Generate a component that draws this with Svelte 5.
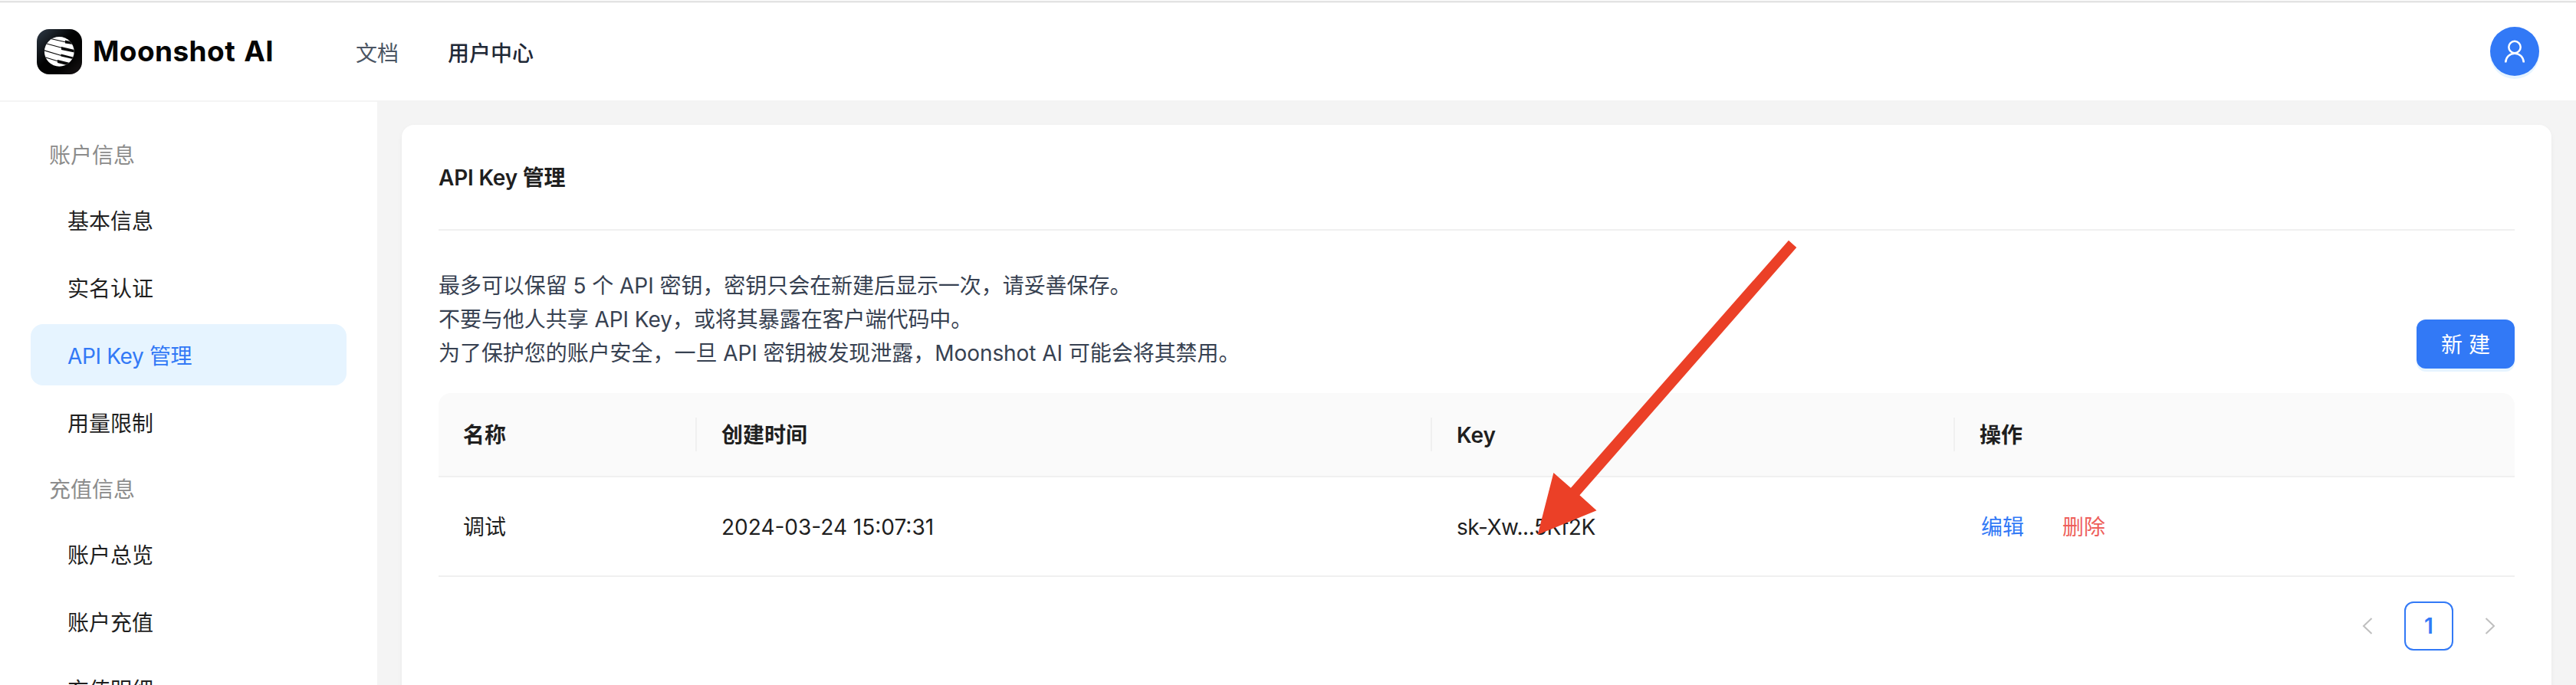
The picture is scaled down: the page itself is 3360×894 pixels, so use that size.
<script>
  const groups = [
    { title: '账户信息', items: ['基本信息', '实名认证', 'API Key 管理', '用量限制'] },
    { title: '充值信息', items: ['账户总览', '账户充值', '充值明细'] }
  ];
  const active = 'API Key 管理';
  const rows = [{ name: '调试', created: '2024-03-24 15:07:31', key: 'sk-Xw...5Kf2K' }];
</script>

<div class="page">
  <header>
    <div class="brand">
      <svg class="mark" width="59" height="59" viewBox="0 0 59 59">
        <defs>
          <linearGradient id="tile" x1="0" y1="0" x2="1" y2="1">
            <stop offset="0" stop-color="#2f3b48" />
            <stop offset="0.45" stop-color="#020202" />
            <stop offset="0.7" stop-color="#020202" />
            <stop offset="1" stop-color="#1a1617" />
          </linearGradient>
          <clipPath id="disc"><circle cx="29.3" cy="29.4" r="19.4" /></clipPath>
        </defs>
        <rect width="59" height="59" rx="16" fill="url(#tile)" />
        <g clip-path="url(#disc)">
          <rect x="9" y="9" width="41" height="41" fill="#fff" />
          <path d="M16 12l22 5M11 18.500l22 6M9 27.500l23 7M10 36.500l18 5.500" stroke="#080808" stroke-width="1.2" fill="none" />
          <path d="M37 14.500l13 3v3l-13-2zM32 23l19 4.500v3.500l-19-4zM31.500 32.500l19.500 5v2.500l-19.500-4.500zM27 40l20 5v4l-20-5z" fill="#080808" />
        </g>
      </svg>
      <span class="wordmark">Moonshot AI</span>
    </div>
    <nav>
      <a class="link">文档</a>
      <a class="link current">用户中心</a>
    </nav>
    <button class="avatar" aria-label="user">
      <svg width="28" height="30" viewBox="0 0 28 30" fill="none" stroke="#fff" stroke-width="2.500">
        <circle cx="14" cy="9.500" r="7.700" />
        <path d="M2.200 29.500a11.800 11.800 0 0 1 23.600 0" />
      </svg>
    </button>
  </header>

  <div class="body">
    <aside>
      {#each groups as group}
        <div class="group">{group.title}</div>
        {#each group.items as item}
          <div class="item" class:active={item === active}>{item}</div>
        {/each}
      {/each}
    </aside>

    <main>
      <section class="card">
        <h1>API Key 管理</h1>
        <div class="intro">
          <div class="notes">
            <p>最多可以保留 5 个 API 密钥，密钥只会在新建后显示一次，请妥善保存。</p>
            <p>不要与他人共享 API Key，或将其暴露在客户端代码中。</p>
            <p>为了保护您的账户安全，一旦 API 密钥被发现泄露，Moonshot AI 可能会将其禁用。</p>
          </div>
          <button class="create">新 建</button>
        </div>

        <div class="table">
          <div class="tr head">
            <div class="th">名称</div>
            <div class="th">创建时间</div>
            <div class="th">Key</div>
            <div class="th">操作</div>
          </div>
          {#each rows as row}
            <div class="tr">
              <div class="td">{row.name}</div>
              <div class="td date">{row.created}</div>
              <div class="td key">{row.key}</div>
              <div class="td actions">
                <a class="edit">编辑</a>
                <a class="remove">删除</a>
              </div>
            </div>
          {/each}
        </div>

        <div class="pager">
          <span class="cell"><svg width="14" height="22" viewBox="0 0 14 22"><path d="M12.500 1L2 11l10.500 10" /></svg></span>
          <span class="cell page-no">1</span>
          <span class="cell"><svg width="14" height="22" viewBox="0 0 14 22"><path d="M1.500 1L12 11 1.500 21" /></svg></span>
        </div>
      </section>
    </main>
  </div>

  <svg class="pointer" width="340" height="386" viewBox="2005 313 340 386">
    <path fill="#eb4027" d="M2333 313.700L2343.300 323L2060.400 646.300L2082.500 666.300L2005.700 697.700L2026.400 617L2048.900 636.700Z" />
  </svg>
</div>

<style>
  :global(body) {
    margin: 0;
    overflow: hidden;
  }
  .page {
    position: relative;
    width: 3360px;
    height: 894px;
    overflow: hidden;
    display: flex;
    flex-direction: column;
    box-sizing: border-box;
    background: #f4f4f4;
    font-family: Inter, 'Noto Sans CJK SC', sans-serif;
    font-size: 28px;
    line-height: 44px;
    color: #1f1f1f;
  }
  .page * {
    box-sizing: border-box;
  }
  header {
    flex: none;
    height: 133px;
    border-top: 3px solid #d0d0d0;
    border-image: linear-gradient(#f6f6f6 0 2px, #cdcdcd 2px 3px) 3 0 0 0;
    box-shadow: inset 0 -2px #f4f4f4;
    background: #fff;
    padding: 0 48px 2px;
    display: flex;
    align-items: center;
  }
  .brand {
    display: flex;
    align-items: center;
    width: 416px;
    gap: 14px;
  }
  .mark {
    display: block;
  }
  .wordmark {
    font-size: 37px;
    font-weight: 700;
    letter-spacing: 0.4px;
    word-spacing: 2px;
    color: #050505;
    white-space: nowrap;
  }
  nav {
    display: flex;
    gap: 64px;
    flex: 1;
    padding-top: 5px;
  }
  .link {
    color: #4b5563;
  }
  .link.current {
    color: #1f2937;
    font-weight: 500;
  }
  button {
    border: 0;
    padding: 0;
    background: #3279f6;
    color: #fff;
    font: inherit;
    box-shadow: 0 4px 0 #e6f4ff;
  }
  .avatar {
    width: 64px;
    height: 64px;
    border-radius: 50%;
    display: flex;
    align-items: center;
    justify-content: center;
  }
  .body {
    flex: 1;
    min-height: 0;
    display: flex;
  }
  aside {
    flex: none;
    width: 492px;
    background: #fff;
    padding: 30px 40px 0;
    display: flex;
    flex-direction: column;
    gap: 8px;
    overflow: hidden;
  }
  .group {
    flex: none;
    padding: 18px 24px 14px;
    color: #8c8c8c;
  }
  .item {
    flex: none;
    height: 80px;
    line-height: 80px;
    padding: 2px 0 0 48px;
    border-radius: 16px;
  }
  .item.active {
    width: 412px;
    background: #e6f4ff;
    color: #3279f6;
    letter-spacing: -0.35px;
  }
  main {
    flex: 1;
    padding: 30px 32px 0;
  }
  .card {
    height: 900px;
    background: #fff;
    border-radius: 16px;
    padding: 0 48px;
    box-shadow: 0 2px 4px rgba(0, 0, 0, 0.03), 0 2px 12px rgba(0, 0, 0, 0.02);
  }
  h1 {
    margin: 0;
    height: 138px;
    border-bottom: 2px solid #f0f0f0;
    font-size: 28px;
    line-height: 138px;
    font-weight: 600;
    letter-spacing: -0.2px;
  }
  .intro {
    padding-top: 48px;
    height: 212px;
    display: flex;
    justify-content: space-between;
  }
  .notes {
    padding-top: 2px;
    color: #374151;
    letter-spacing: -0.05px;
  }
  p {
    margin: 0;
  }
  .create {
    margin-top: 68px;
    width: 128px;
    height: 64px;
    padding-top: 2px;
    border-radius: 12px;
  }
  .tr {
    display: grid;
    grid-template-columns: 337px 959px 682px 730px;
    align-items: center;
    height: 130px;
    padding-top: 2px;
    border-bottom: 2px solid #f0f0f0;
  }
  .tr.head {
    height: 110px;
    padding-top: 0;
    background: #fafafa;
    border-radius: 16px 16px 0 0;
    font-weight: 600;
  }
  .th,
  .td {
    padding-left: 32px;
  }
  .th {
    line-height: 42px;
    padding-top: 2px;
  }
  .th:not(:last-child) {
    border-right: 2px solid #f0f0f0;
  }
  .key {
    letter-spacing: -0.45px;
  }
  .actions {
    display: flex;
    gap: 50px;
    padding-left: 34px;
  }
  .edit {
    color: #3279f6;
  }
  .remove {
    color: #ee5f5b;
  }
  .pager {
    margin-top: 32px;
    display: flex;
    justify-content: flex-end;
    gap: 16px;
  }
  .cell {
    width: 64px;
    height: 64px;
    display: flex;
    align-items: center;
    justify-content: center;
  }
  .cell path {
    fill: none;
    stroke: #bfbfbf;
    stroke-width: 2;
  }
  .page-no {
    border: 2px solid #3279f6;
    border-radius: 12px;
    color: #3279f6;
    font-weight: 600;
  }
  .pointer {
    position: absolute;
    left: 2005px;
    top: 313px;
  }
</style>
